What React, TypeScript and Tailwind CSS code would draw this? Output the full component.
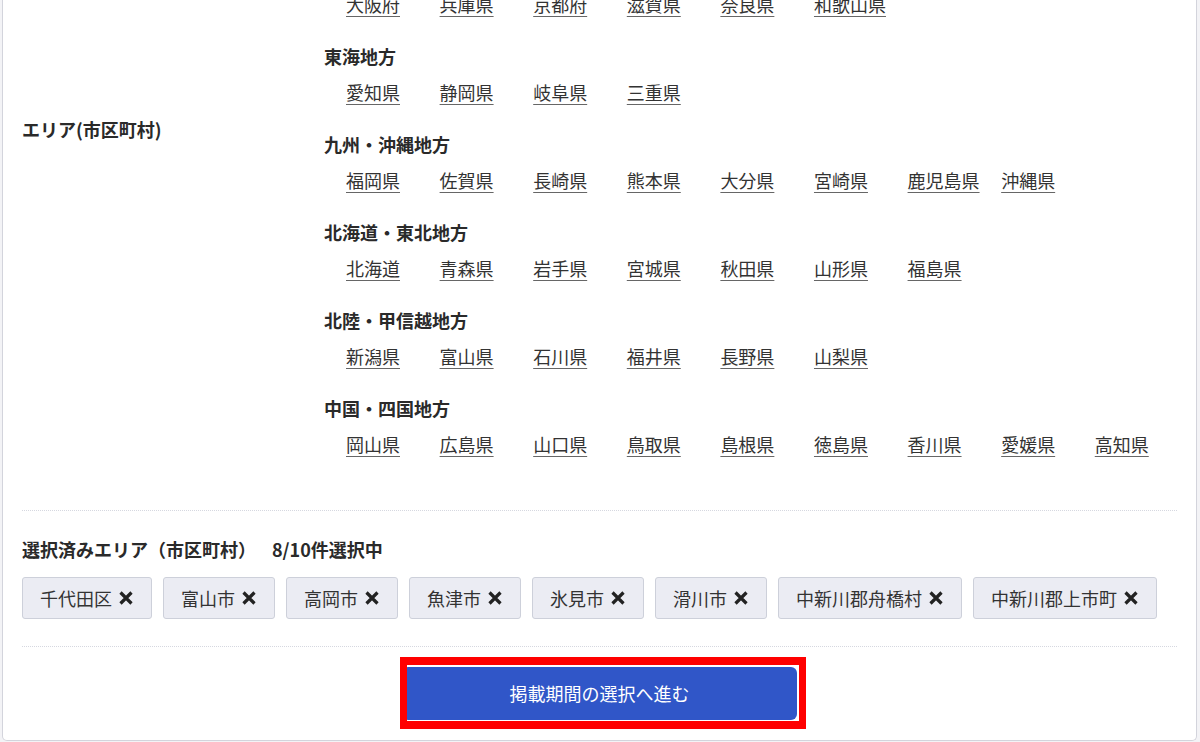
import { Fragment } from "react";

type Region = { name: string; prefs: string[] };

// 近畿 is the block above 東海; only its link row shows at the top of the scrolled card
const kinki = ["大阪府", "兵庫県", "京都府", "滋賀県", "奈良県", "和歌山県"];

const regions: Region[] = [
  { name: "東海地方", prefs: ["愛知県", "静岡県", "岐阜県", "三重県"] },
  {
    name: "九州・沖縄地方",
    prefs: ["福岡県", "佐賀県", "長崎県", "熊本県", "大分県", "宮崎県", "鹿児島県", "沖縄県"],
  },
  {
    name: "北海道・東北地方",
    prefs: ["北海道", "青森県", "岩手県", "宮城県", "秋田県", "山形県", "福島県"],
  },
  {
    name: "北陸・甲信越地方",
    prefs: ["新潟県", "富山県", "石川県", "福井県", "長野県", "山梨県"],
  },
  {
    name: "中国・四国地方",
    prefs: ["岡山県", "広島県", "山口県", "鳥取県", "島根県", "徳島県", "香川県", "愛媛県", "高知県"],
  },
];

const selected = [
  "千代田区",
  "富山市",
  "高岡市",
  "魚津市",
  "氷見市",
  "滑川市",
  "中新川郡舟橋村",
  "中新川郡上市町",
];

function PrefRow({ prefs }: { prefs: string[] }) {
  return (
    <div className="flex pl-[22px] leading-[27px]">
      {prefs.map((p) => (
        <div key={p} className="w-[93.6px] shrink-0 last:w-auto">
          <a
            href="#"
            className="whitespace-nowrap text-[#333] underline decoration-[#666] underline-offset-[4px]"
          >
            {p}
          </a>
        </div>
      ))}
    </div>
  );
}

function RemoveIcon() {
  return (
    <svg width="16" height="14" viewBox="0 0 16 14" className="shrink-0">
      <path
        d="M2.5 1.5 L13.5 12.5 M13.5 1.5 L2.5 12.5"
        stroke="#222"
        strokeWidth="3.2"
        strokeLinecap="butt"
        fill="none"
      />
    </svg>
  );
}

export default function App() {
  return (
    <div
      className="h-[742px] overflow-hidden bg-[#f3f3f6] text-[18px] text-[#333]"
      style={{ fontFamily: '"Noto Sans CJK JP", "Noto Sans", sans-serif' }}
    >
      <div className="-mt-[9px] ml-[2px] mr-[3px] rounded-b-[5px] border border-t-0 border-[#d3d4dc] bg-white px-[19px]">
        {/* area picker */}
        <div className="flex pb-[52px]">
          <div className="w-[302px] shrink-0 pt-[125px]">
            <div className="font-bold leading-[27px] text-[#2a2a2a]">エリア(市区町村)</div>
          </div>
          <div className="flex-1">
            <PrefRow prefs={kinki} />
            {regions.map((r) => (
              <Fragment key={r.name}>
                <div className="mt-[25px] font-bold leading-[27px] text-[#2a2a2a]">{r.name}</div>
                <div className="mt-[9px]">
                  <PrefRow prefs={r.prefs} />
                </div>
              </Fragment>
            ))}
          </div>
        </div>

        {/* selected areas */}
        <div className="border-t border-dotted border-[#d6d8e0] pt-[25px] pb-[27px]">
          <div className="font-bold leading-[27px] text-[#2a2a2a]">
            選択済みエリア（市区町村）<span className="ml-[16px]">8/10件選択中</span>
          </div>
          <div className="mt-[14px] flex flex-wrap gap-[11px]">
            {selected.map((s) => (
              <button
                key={s}
                className="flex h-[42px] items-center gap-[6px] rounded-[3px] border border-[#cdd0da] bg-[#ebecf3] px-[17px] text-[#333]"
              >
                <span>{s}</span>
                <RemoveIcon />
              </button>
            ))}
          </div>
        </div>

        {/* next step */}
        <div className="border-t border-dotted border-[#d6d8e0] pt-[20px] pb-[20px]">
          <div className="relative mx-auto w-[395px]">
            <button className="block h-[53px] w-[395px] rounded-[6px] bg-[#3056c8] text-white">
              掲載期間の選択へ進む
            </button>
            <div className="pointer-events-none absolute -top-[10px] -left-[2px] h-[72px] w-[406px] border-x-[7px] border-y-[8px] border-[#ff0000]" />
          </div>
        </div>
      </div>
    </div>
  );
}
